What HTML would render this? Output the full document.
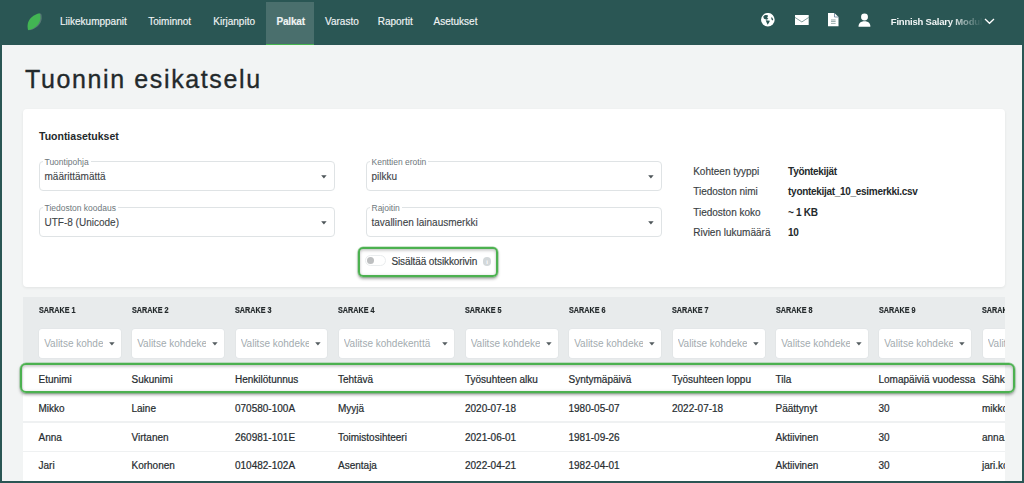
<!DOCTYPE html>
<html><head><meta charset="utf-8">
<style>
*{box-sizing:border-box;margin:0;padding:0}
html,body{width:1024px;height:483px;overflow:hidden;background:#2a5654;font-family:"Liberation Sans",sans-serif}
.a{position:absolute;white-space:nowrap;line-height:1}
#nav{position:absolute;left:0;top:0;width:1024px;height:45px;background:#2a5654}
.ni{position:absolute;top:16.9px;font-size:10px;color:#f0f4f4;-webkit-text-stroke:0.15px #f0f4f4;line-height:1;white-space:nowrap}
#active{position:absolute;left:266px;top:2px;width:48px;height:43px;background:#4a6f6d;border-bottom:1.5px solid #45b34f}
#page{position:absolute;left:2px;top:45px;width:1020px;height:436px;background:#f2f4f4;overflow:hidden}
#title{position:absolute;left:23px;top:21.8px;font-size:25px;letter-spacing:1.62px;-webkit-text-stroke:0.35px #23292b;color:#23292b;line-height:1;white-space:nowrap}
#card{position:absolute;left:21px;top:64px;width:982px;height:178px;background:#fff;border-radius:4px;box-shadow:0 1px 3px rgba(0,0,0,.07)}
.fld{position:absolute;width:296px;height:29.5px;border:1px solid #dfe3e5;border-radius:4px}
.lbl{position:absolute;left:3px;top:-4.2px;font-size:8.5px;color:#6e777c;background:#fff;padding:0 2px;line-height:1;white-space:nowrap}
.val{position:absolute;left:5px;top:9.8px;font-size:10px;color:#3c4346;-webkit-text-stroke:0.1px #3c4346;line-height:1;white-space:nowrap}
.arr{position:absolute;right:6.2px;top:13.1px;width:6px;height:4px}
.inf{position:absolute;font-size:10px;color:#3a4144;-webkit-text-stroke:0.15px #3a4144;line-height:1;white-space:nowrap}
.infv{position:absolute;font-size:10px;letter-spacing:-0.3px;font-weight:bold;color:#23292b;line-height:1;white-space:nowrap}
#thead{position:absolute;left:21px;top:252px;width:982px;height:67px;background:#e8ebec}
#tbody{position:absolute;left:21px;top:318.5px;width:982px;height:120px;background:#fff}
.sep{position:absolute;left:0;width:982px;height:1.5px;background:#eff1f2}
.th{position:absolute;top:8.9px;font-size:8.8px;transform:scaleX(0.82);-webkit-text-stroke:0.2px #23292b;transform-origin:0 0;font-weight:bold;color:#23292b;line-height:1;white-space:nowrap}
.sel{position:absolute;top:32.1px;height:28.7px;background:#fff;border-radius:3px;overflow:hidden;box-shadow:0 0 0 0.6px #dfe3e5}
.ph{position:absolute;left:5px;top:10.3px;right:18px;overflow:hidden;font-size:10px;color:#a3abaf;line-height:1;white-space:nowrap}
.sarr{position:absolute;right:6px;top:12.9px;width:6px;height:4px}
.phmask{position:absolute;top:0;height:100%;width:16px;background:linear-gradient(to right,rgba(255,255,255,0),#fff 60%)}
.td{position:absolute;font-size:10px;color:#262c2f;-webkit-text-stroke:0.2px #262c2f;line-height:1;white-space:nowrap}
#cols{position:absolute;left:21px;top:252px;width:982px;height:184px;overflow:hidden}
#green{position:absolute;left:17.6px;top:318.1px;width:995.3px;height:29.8px;border:2.5px solid #4cb150;border-radius:6px;box-shadow:0 0 0 0.5px rgba(76,177,80,.55), 0 2px 3px rgba(0,0,0,.34), inset 0 2px 3px rgba(0,0,0,.16), inset 0 0 3px rgba(0,0,0,.12)}
</style></head>
<body>
<div id="nav">
  <!-- leaf -->
  <svg class="a" style="left:26px;top:12px" width="18" height="19" viewBox="0 0 18 19">
    <path d="M15 1.6 C9.5 2.8 3.4 6.8 3 13.4 C2.9 15.6 3.2 17.4 3.6 18.2 C9.8 16.8 15.3 12.6 15.7 6.4 C15.8 4.5 15.6 2.7 15 1.6 Z" fill="#6a8583" opacity="0.7"/>
    <path d="M13.6 1.2 C8 2.5 2 6.5 1.6 13.2 C1.5 15.5 1.8 17.4 2.2 18.2 C8.5 16.8 14 12.5 14.4 6.2 C14.5 4.3 14.2 2.3 13.6 1.2 Z" fill="#42b553"/>
  </svg>
  <div id="active"></div>
  <span class="ni" style="left:60px">Liikekumppanit</span>
  <span class="ni" style="left:148.3px">Toiminnot</span>
  <span class="ni" style="left:213.3px">Kirjanpito</span>
  <span class="ni" style="left:276.5px;font-weight:bold;font-size:10px;letter-spacing:-0.2px">Palkat</span>
  <span class="ni" style="left:325px">Varasto</span>
  <span class="ni" style="left:377.7px">Raportit</span>
  <span class="ni" style="left:433.5px">Asetukset</span>
  <!-- globe -->
  <svg class="a" style="left:761px;top:12.7px" width="14" height="14" viewBox="0 0 14 14">
    <circle cx="6.85" cy="6.75" r="6.8" fill="#fff"/>
    <path d="M2.4 3.3 C3.2 2.4 4.2 2 5 2 L6.9 2.3 L6.7 4 L6 4.8 L7.4 5.7 L5.7 6.7 L3 5.8 C2.5 5 2.3 4 2.4 3.3 Z" fill="#2a5654"/>
    <path d="M4.7 7.2 L8.9 7.7 L8.2 9.2 L6.7 11.7 L5.7 9.7 Z" fill="#2a5654"/>
    <path d="M10.2 4.2 L11.4 4.7 L12.2 6.7 L11.4 7.5 L10.4 6.2 Z" fill="#2a5654"/>
  </svg>
  <!-- mail -->
  <svg class="a" style="left:794.5px;top:14.75px" width="14" height="10.2" viewBox="0 0 14 10.2">
    <rect x="0" y="0" width="13.7" height="10.15" fill="#fff"/>
    <path d="M0 2.45 L6.85 6.95 L13.7 2.45" fill="none" stroke="#4f7674" stroke-width="0.7"/>
  </svg>
  <!-- doc -->
  <svg class="a" style="left:828px;top:13px" width="11" height="14" viewBox="0 0 11 14">
    <path d="M0 0 H6.4 L10.5 4.1 V13.2 H0 Z" fill="#fff"/>
    <path d="M6.5 0 V4 H10.5" fill="none" stroke="#4f6f8a" stroke-width="0.7"/>
    <rect x="3" y="6.4" width="4.6" height="1.1" fill="#9db0b0"/>
    <rect x="3" y="8" width="4.6" height="1.1" fill="#9db0b0"/>
    <rect x="3" y="10" width="4.6" height="0.9" fill="#9db0b0"/>
  </svg>
  <!-- user -->
  <svg class="a" style="left:858px;top:12.5px" width="13" height="14" viewBox="0 0 13 14">
    <circle cx="6.5" cy="3.95" r="3.45" fill="#fff"/>
    <path d="M0.5 13.7 C0.5 10.3 2.6 8.2 6.5 8.2 C10.4 8.2 12.4 10.3 12.4 13.7 Z" fill="#fff"/>
  </svg>
  <span class="a" style="left:890.8px;top:15.7px;height:14px;line-height:11px;letter-spacing:-0.2px;font-size:9.5px;font-weight:bold;color:#f2f6f6;-webkit-mask-image:linear-gradient(to right,#000 0%,#000 64%,rgba(0,0,0,.1) 96%,rgba(0,0,0,0) 100%);width:92px;overflow:hidden">Finnish Salary Modul</span>
  <svg class="a" style="left:983.5px;top:17.5px" width="11" height="7" viewBox="0 0 11 7">
    <path d="M1 1 L5.5 5.3 L10 1" fill="none" stroke="#fff" stroke-width="1.3"/>
  </svg>
</div>

<div id="page">
  <div id="title">Tuonnin esikatselu</div>
  <div id="card">
    <span class="a" style="left:16px;top:21.8px;font-size:10.5px;font-weight:bold;color:#23292b">Tuontiasetukset</span>
    <div class="fld" style="left:15.5px;top:52px"><span class="lbl">Tuontipohja</span><span class="val">määrittämättä</span><svg class="arr" viewBox="0 0 6 4"><path d="M0.2 0.2 H5.6 L2.9 3.5 Z" fill="#4d5558"/></svg></div>
    <div class="fld" style="left:15.5px;top:98px"><span class="lbl">Tiedoston koodaus</span><span class="val">UTF-8 (Unicode)</span><svg class="arr" viewBox="0 0 6 4"><path d="M0.2 0.2 H5.6 L2.9 3.5 Z" fill="#4d5558"/></svg></div>
    <div class="fld" style="left:342.5px;top:52px"><span class="lbl">Kenttien erotin</span><span class="val">pilkku</span><svg class="arr" viewBox="0 0 6 4"><path d="M0.2 0.2 H5.6 L2.9 3.5 Z" fill="#4d5558"/></svg></div>
    <div class="fld" style="left:342.5px;top:98px"><span class="lbl">Rajoitin</span><span class="val">tavallinen lainausmerkki</span><svg class="arr" viewBox="0 0 6 4"><path d="M0.2 0.2 H5.6 L2.9 3.5 Z" fill="#4d5558"/></svg></div>

    <div class="a" style="left:335.2px;top:138.1px;width:139.5px;height:29.8px;border:2.5px solid #4cb150;border-radius:5px;box-shadow:0 0 0 0.5px rgba(76,177,80,.55), 0 2px 3px rgba(0,0,0,.34), inset 0 2px 3px rgba(0,0,0,.16), inset 0 0 3px rgba(0,0,0,.12)"></div>
    <div class="a" style="left:342.3px;top:146.3px;width:20.3px;height:10.5px;border:1px solid #eaedee;border-radius:6px;background:#fff"></div>
    <div class="a" style="left:344.2px;top:148px;width:7px;height:7px;border-radius:50%;background:#bdbfc0"></div>
    <span class="a" style="left:368.4px;top:147.5px;font-size:10px;letter-spacing:-0.1px;color:#343a3d;-webkit-text-stroke:0.15px #343a3d">Sisältää otsikkorivin</span>
    <div class="a" style="left:459.8px;top:148px;width:8.6px;height:8.6px;border-radius:50%;background:#d3d8da"></div>
    <span class="a" style="left:463.2px;top:149.6px;font-size:6px;font-weight:bold;color:#fff">i</span>

    <span class="inf" style="left:670.2px;top:58px">Kohteen tyyppi</span>
    <span class="inf" style="left:670.2px;top:78.4px">Tiedoston nimi</span>
    <span class="inf" style="left:670.2px;top:98.6px">Tiedoston koko</span>
    <span class="inf" style="left:670.2px;top:119px">Rivien lukumäärä</span>
    <span class="infv" style="left:765.1px;top:58px">Työntekijät</span>
    <span class="infv" style="left:765.1px;top:78.4px">tyontekijat_10_esimerkki.csv</span>
    <span class="infv" style="left:765.1px;top:98.6px">~ 1 KB</span>
    <span class="infv" style="left:765.1px;top:119px">10</span>
  </div>

  <div id="thead"></div>
  <div id="tbody">
    <div class="sep" style="top:29px"></div>
    <div class="sep" style="top:57.7px"></div>
    <div class="sep" style="top:87.4px"></div>
  </div>
  <div id="cols">
<span class="th" style="left:15.5px">SARAKE 1</span>
<div class="sel" style="left:16.2px;width:81.4px"><span class="ph">Valitse kohdekenttä</span><svg class="sarr" viewBox="0 0 6 4"><path d="M0.2 0.2 H5.6 L2.9 3.5 Z" fill="#555d60"/></svg></div>
<span class="td" style="left:15.5px;top:77.9px">Etunimi</span>
<span class="td" style="left:15.5px;top:106.5px">Mikko</span>
<span class="td" style="left:15.5px;top:135.6px">Anna</span>
<span class="td" style="left:15.5px;top:163.9px">Jari</span>
<span class="th" style="left:108.5px">SARAKE 2</span>
<div class="sel" style="left:109.2px;width:91.9px"><span class="ph">Valitse kohdekenttä</span><svg class="sarr" viewBox="0 0 6 4"><path d="M0.2 0.2 H5.6 L2.9 3.5 Z" fill="#555d60"/></svg></div>
<span class="td" style="left:108.5px;top:77.9px">Sukunimi</span>
<span class="td" style="left:108.5px;top:106.5px">Laine</span>
<span class="td" style="left:108.5px;top:135.6px">Virtanen</span>
<span class="td" style="left:108.5px;top:163.9px">Korhonen</span>
<span class="th" style="left:212.0px">SARAKE 3</span>
<div class="sel" style="left:212.7px;width:91.4px"><span class="ph">Valitse kohdekenttä</span><svg class="sarr" viewBox="0 0 6 4"><path d="M0.2 0.2 H5.6 L2.9 3.5 Z" fill="#555d60"/></svg></div>
<span class="td" style="left:212.0px;top:77.9px">Henkilötunnus</span>
<span class="td" style="left:212.0px;top:106.5px">070580-100A</span>
<span class="td" style="left:212.0px;top:135.6px">260981-101E</span>
<span class="td" style="left:212.0px;top:163.9px">010482-102A</span>
<span class="th" style="left:315.0px">SARAKE 4</span>
<div class="sel" style="left:315.7px;width:115.4px"><span class="ph">Valitse kohdekenttä</span><svg class="sarr" viewBox="0 0 6 4"><path d="M0.2 0.2 H5.6 L2.9 3.5 Z" fill="#555d60"/></svg></div>
<span class="td" style="left:315.0px;top:77.9px">Tehtävä</span>
<span class="td" style="left:315.0px;top:106.5px">Myyjä</span>
<span class="td" style="left:315.0px;top:135.6px">Toimistosihteeri</span>
<span class="td" style="left:315.0px;top:163.9px">Asentaja</span>
<span class="th" style="left:442.0px">SARAKE 5</span>
<div class="sel" style="left:442.7px;width:91.9px"><span class="ph">Valitse kohdekenttä</span><svg class="sarr" viewBox="0 0 6 4"><path d="M0.2 0.2 H5.6 L2.9 3.5 Z" fill="#555d60"/></svg></div>
<span class="td" style="left:442.0px;top:77.9px">Työsuhteen alku</span>
<span class="td" style="left:442.0px;top:106.5px">2020-07-18</span>
<span class="td" style="left:442.0px;top:135.6px">2021-06-01</span>
<span class="td" style="left:442.0px;top:163.9px">2022-04-21</span>
<span class="th" style="left:545.5px">SARAKE 6</span>
<div class="sel" style="left:546.2px;width:91.9px"><span class="ph">Valitse kohdekenttä</span><svg class="sarr" viewBox="0 0 6 4"><path d="M0.2 0.2 H5.6 L2.9 3.5 Z" fill="#555d60"/></svg></div>
<span class="td" style="left:545.5px;top:77.9px">Syntymäpäivä</span>
<span class="td" style="left:545.5px;top:106.5px">1980-05-07</span>
<span class="td" style="left:545.5px;top:135.6px">1981-09-26</span>
<span class="td" style="left:545.5px;top:163.9px">1982-04-01</span>
<span class="th" style="left:649.0px">SARAKE 7</span>
<div class="sel" style="left:649.7px;width:91.9px"><span class="ph">Valitse kohdekenttä</span><svg class="sarr" viewBox="0 0 6 4"><path d="M0.2 0.2 H5.6 L2.9 3.5 Z" fill="#555d60"/></svg></div>
<span class="td" style="left:649.0px;top:77.9px">Työsuhteen loppu</span>
<span class="td" style="left:649.0px;top:106.5px">2022-07-18</span>
<span class="th" style="left:752.5px">SARAKE 8</span>
<div class="sel" style="left:753.2px;width:91.4px"><span class="ph">Valitse kohdekenttä</span><svg class="sarr" viewBox="0 0 6 4"><path d="M0.2 0.2 H5.6 L2.9 3.5 Z" fill="#555d60"/></svg></div>
<span class="td" style="left:752.5px;top:77.9px">Tila</span>
<span class="td" style="left:752.5px;top:106.5px">Päättynyt</span>
<span class="td" style="left:752.5px;top:135.6px">Aktiivinen</span>
<span class="td" style="left:752.5px;top:163.9px">Aktiivinen</span>
<span class="th" style="left:855.5px">SARAKE 9</span>
<div class="sel" style="left:856.2px;width:91.9px"><span class="ph">Valitse kohdekenttä</span><svg class="sarr" viewBox="0 0 6 4"><path d="M0.2 0.2 H5.6 L2.9 3.5 Z" fill="#555d60"/></svg></div>
<span class="td" style="left:855.5px;top:77.9px">Lomapäiviä vuodessa</span>
<span class="td" style="left:855.5px;top:106.5px">30</span>
<span class="td" style="left:855.5px;top:135.6px">30</span>
<span class="td" style="left:855.5px;top:163.9px">30</span>
<span class="th" style="left:959.0px">SARAKE 10</span>
<div class="sel" style="left:959.7px;width:91.9px"><span class="ph">Valitse kohdekenttä</span><svg class="sarr" viewBox="0 0 6 4"><path d="M0.2 0.2 H5.6 L2.9 3.5 Z" fill="#555d60"/></svg></div>
<span class="td" style="left:959.0px;top:77.9px">Sähköposti</span>
<span class="td" style="left:959.0px;top:106.5px">mikko.laine@example.com</span>
<span class="td" style="left:959.0px;top:135.6px">anna.virtanen@example.com</span>
<span class="td" style="left:959.0px;top:163.9px">jari.korhonen@example.com</span>
</div>
  <div id="green"></div>
</div>
</body></html>
